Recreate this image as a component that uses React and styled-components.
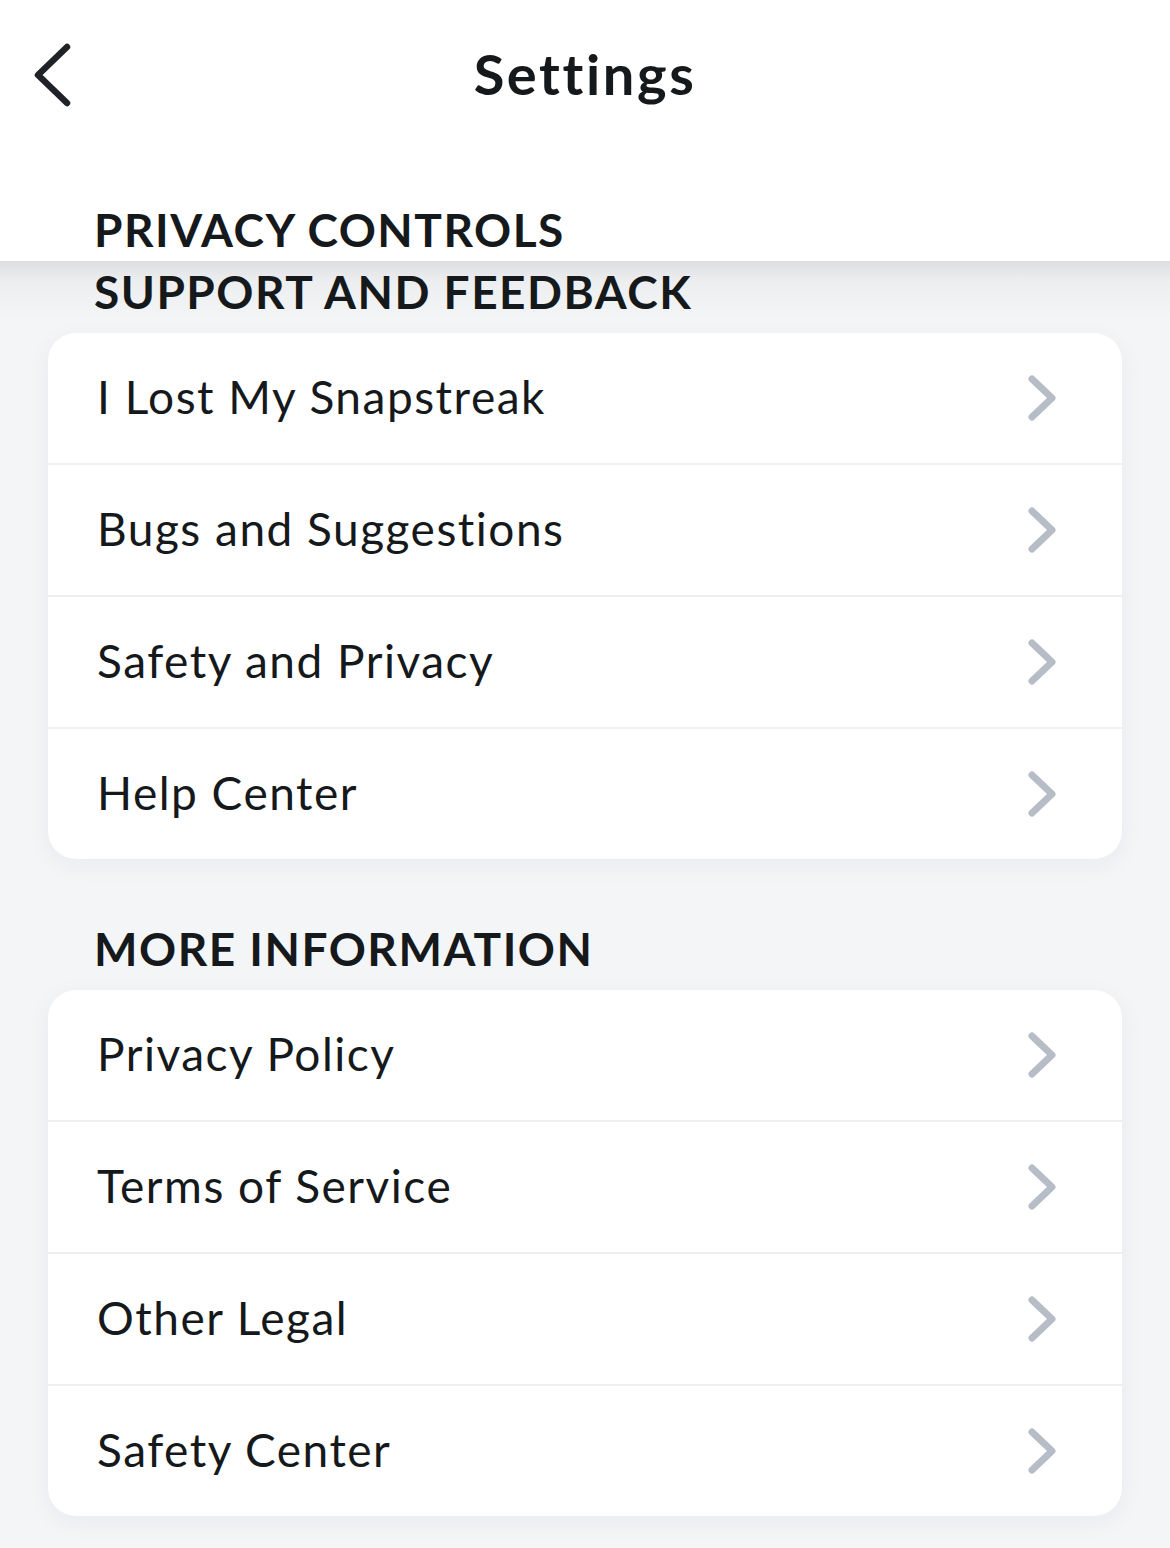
import React from "react";
import styled, { createGlobalStyle } from "styled-components";

const GlobalStyle = createGlobalStyle`
  html, body {
    margin: 0;
    padding: 0;
    background: #f4f5f7;
    font-family: Lato, "Open Sans", "Liberation Sans", sans-serif;
    color: #16191c;
    -webkit-font-smoothing: antialiased;
  }
`;

const sections = [
  {
    title: "SUPPORT AND FEEDBACK",
    items: ["I Lost My Snapstreak", "Bugs and Suggestions", "Safety and Privacy", "Help Center"],
  },
  {
    title: "MORE INFORMATION",
    items: ["Privacy Policy", "Terms of Service", "Other Legal", "Safety Center"],
  },
];

const BackChevron = () => (
  <svg width="46" height="66" viewBox="0 0 46 66" fill="none">
    <polyline
      points="37,5 8,33 37,61"
      stroke="#1f2226"
      strokeWidth="6.5"
      strokeLinecap="round"
      strokeLinejoin="round"
    />
  </svg>
);

const RowChevron = () => (
  <svg width="36" height="50" viewBox="0 0 36 50" fill="none">
    <polyline
      points="8,6 28,25 8,44"
      stroke="#b6bdc6"
      strokeWidth="7"
      strokeLinecap="round"
      strokeLinejoin="round"
    />
  </svg>
);

const App = () => {
  return (
    <Page>
      <GlobalStyle />
      <Header>
        <TopBar>
          <BackButton>
            <BackChevron />
          </BackButton>
          <Title>Settings</Title>
        </TopBar>
        <SectionLabel $top>PRIVACY CONTROLS</SectionLabel>
      </Header>
      <Content>
        {sections.map((s, i) => (
          <Section key={s.title} $first={i === 0}>
            <SectionLabel>{s.title}</SectionLabel>
            <Card>
              {s.items.map((item) => (
                <Row key={item}>
                  <RowLabel>{item}</RowLabel>
                  <RowChevron />
                </Row>
              ))}
            </Card>
          </Section>
        ))}
      </Content>
    </Page>
  );
};

const Page = styled.div`
  width: 1170px;
  min-height: 1548px;
  background: #f4f5f7;
  overflow: hidden;
`;

const Header = styled.div`
  background: #fff;
  height: 261px;
  display: flex;
  flex-direction: column;
  position: relative;
  z-index: 1;
`;

const TopBar = styled.div`
  height: 150px;
  display: flex;
  align-items: center;
  justify-content: center;
  position: relative;
`;

const BackButton = styled.div`
  position: absolute;
  left: 30px;
  top: 42px;
  display: flex;
`;

const Title = styled.h1`
  margin: 0;
  margin-top: -3px;
  font-size: 56px;
  font-weight: 700;
  color: #16191c;
  letter-spacing: 2.6px;
`;

const SectionLabel = styled.div`
  padding-left: 94px;
  font-size: 46px;
  font-weight: 700;
  line-height: 1;
  color: #16191c;
  letter-spacing: 1.5px;
  margin-top: ${(p) => (p.$top ? "57px" : "0")};
  margin-bottom: ${(p) => (p.$top ? "0" : "18px")};
`;

const Content = styled.div`
  background: linear-gradient(to bottom, #dcdee1 0px, #eceef0 20px, #f4f5f7 60px);
  padding-top: 8px;
  padding-bottom: 40px;
`;

const Section = styled.div`
  margin-top: ${(p) => (p.$first ? "0" : "67px")};
`;

const Card = styled.div`
  margin: 0 48px;
  background: #fff;
  border-radius: 28px;
  overflow: hidden;
  box-shadow: 0 6px 24px rgba(20, 30, 50, 0.05);
  display: flex;
  flex-direction: column;
`;

const Row = styled.div`
  height: 130px;
  display: flex;
  align-items: center;
  justify-content: space-between;
  padding: 0 62px 0 49px;
  & + & {
    border-top: 2px solid #eeeff1;
  }
`;

const RowLabel = styled.span`
  font-size: 46px;
  font-weight: 400;
  color: #16191c;
  letter-spacing: 1.5px;
  margin-top: -4px;
`;

export default App;
